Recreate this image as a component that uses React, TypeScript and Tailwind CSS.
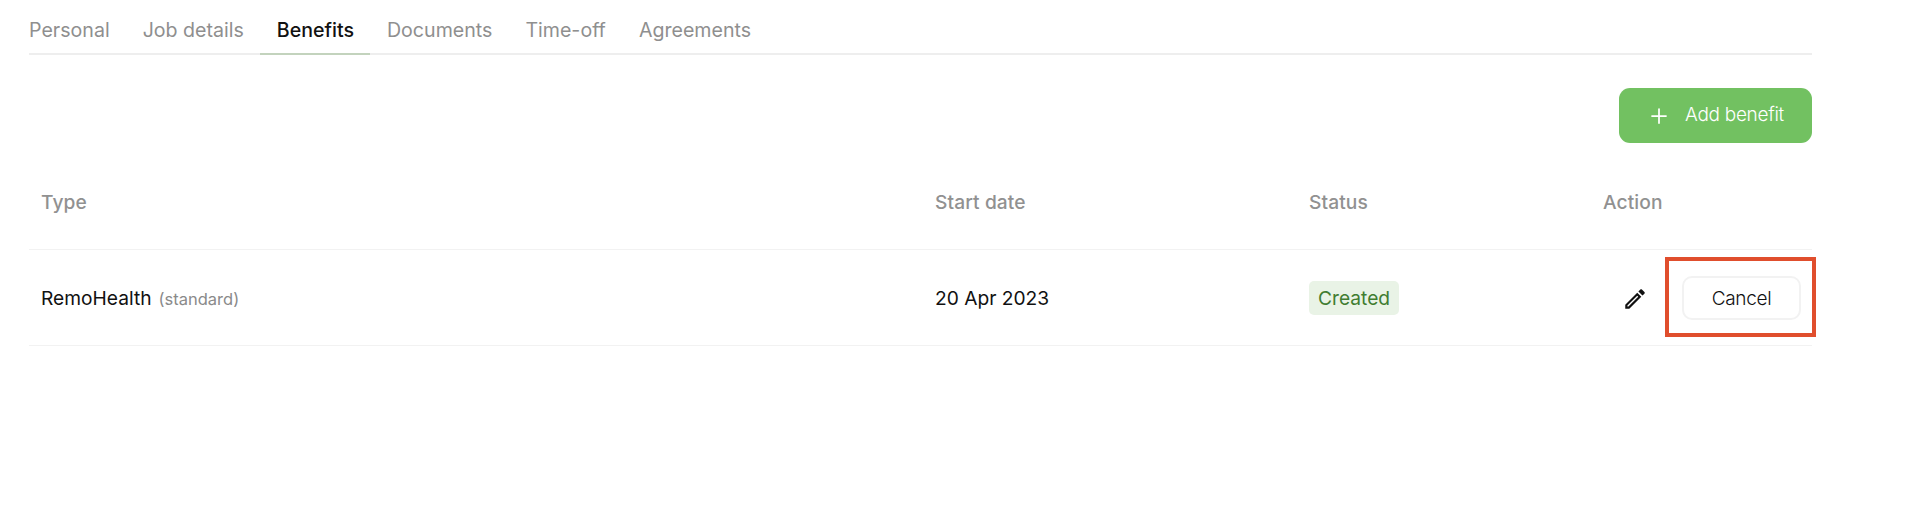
import { Plus } from "lucide-react";
import { MdOutlineEdit } from "react-icons/md";

const tabs = ["Personal", "Job details", "Benefits", "Documents", "Time-off", "Agreements"];

export default function App() {
  return (
    <div className="h-[524px] w-[1916px] overflow-hidden bg-white font-['Inter',sans-serif] text-[19.2px]">
      <div className="ml-[29px] w-[1783px]">
        <nav className="flex h-[55px] border-b-2 border-[#eeeeee] pt-[16px] text-[19.6px]">
          {tabs.map((t, i) => (
            <div
              key={t}
              className={`-mb-[2px] flex h-[39px] items-start border-b-2 leading-[28px] ${i === 0 ? "pr-[16.5px]" : "px-[16.5px]"} ${t === "Benefits" ? "border-[#c3d3bd] font-medium text-[#111111]" : "border-transparent text-[#8f8f8f]"}`}
            >
              {t}
            </div>
          ))}
        </nav>
        <div className="flex justify-end pt-[33px]">
          <button className="flex h-[55px] w-[193px] items-center justify-center gap-[14px] rounded-[11px] bg-[#72c161] text-[19px] font-light tracking-[-0.3px] text-white">
            <Plus size={24} strokeWidth={1.75} />
            Add benefit
          </button>
        </div>
        <div className="grid h-[107px] grid-cols-[894px_374px_294px_1fr] items-center border-b border-[#f2f2f2] pl-[12px] pt-[13px] font-medium tracking-[0.1px] text-[#919191]">
          <span>Type</span>
          <span>Start date</span>
          <span>Status</span>
          <span>Action</span>
        </div>
        <div className="grid h-[96px] grid-cols-[894px_374px_1fr] items-center border-b border-[#f2f2f2] pl-[12px] pt-[1px] text-[#111111]">
          <div className="flex items-baseline gap-[7px]">
            <span>RemoHealth</span>
            <span className="text-[16.5px] text-[#8a8a8a]">(standard)</span>
          </div>
          <span>20 Apr 2023</span>
          <div className="flex items-center justify-between">
            <span className="rounded-[5px] bg-[#e9f3e6] px-[9px] py-[4px] leading-[26px] text-[#417d31]">Created</span>
            <div className="flex items-center gap-[17px]">
              <MdOutlineEdit size={26} className="mt-[1px] text-[#111111]" />
              <div className="-mr-[4px] mb-[2px] flex h-[80px] w-[151px] items-center justify-center border-4 border-[#e04e2d]">
                <button className="ml-[2px] mt-[2px] h-[44px] w-[119px] rounded-[10px] border-2 border-[#f2f2f2] bg-white pt-[2px] text-[19px] font-light tracking-[-0.3px] text-[#111111]">
                  Cancel
                </button>
              </div>
            </div>
          </div>
        </div>
      </div>
    </div>
  );
}
